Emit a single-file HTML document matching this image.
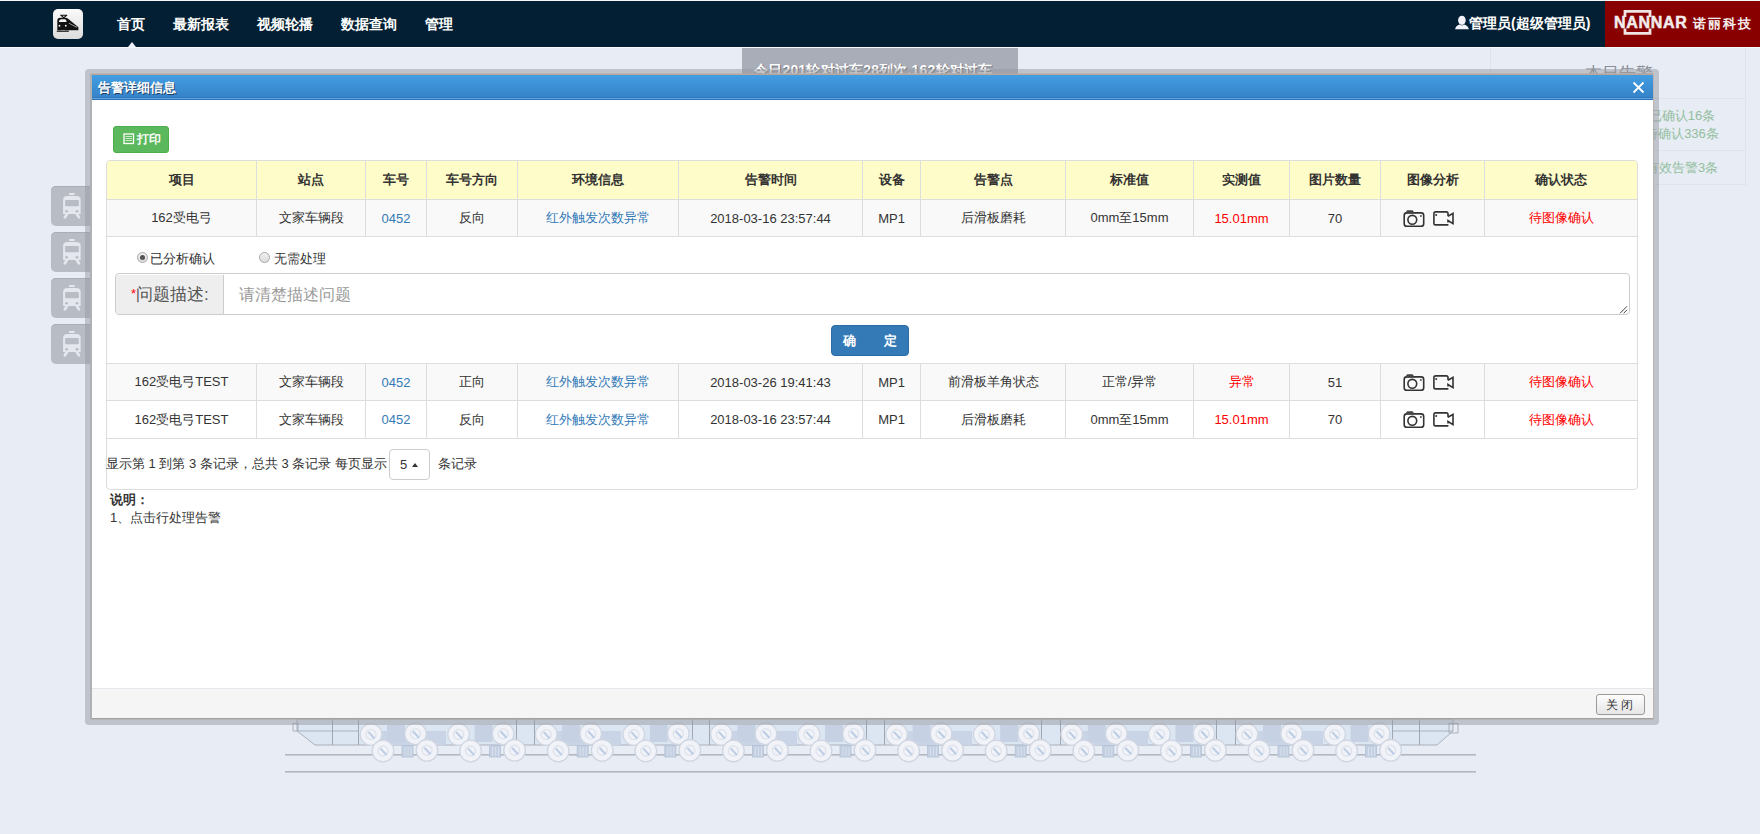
<!DOCTYPE html>
<html><head><meta charset="utf-8">
<style>
*{box-sizing:border-box;margin:0;padding:0}
html,body{width:1760px;height:834px;overflow:hidden}
body{position:relative;background:#e8ecf4;font-family:"Liberation Sans",sans-serif;font-size:13px;color:#333}
.abs{position:absolute}
#nav{left:0;top:1px;width:1760px;height:46px;background:#031f33}
#topline{left:0;top:0;width:1760px;height:1px;background:#f4f6fa}
.logo{left:53px;top:9px;width:30px;height:30px;border-radius:5px;background:linear-gradient(#fafafa,#dcdcdc)}
.menu{top:16px;color:#fff;font-weight:bold;font-size:14px;line-height:16px;white-space:nowrap}
.caret{left:128px;top:42px;width:0;height:0;border-left:4px solid transparent;border-right:4px solid transparent;border-bottom:5px solid #eef1f7}
.brand{left:1605px;top:1px;width:155px;height:46px;background:#880000}
.user{left:1455px;top:15px;color:#fff;font-weight:bold;font-size:14px;line-height:16px;white-space:nowrap}
/* background widgets */
.tipbox{left:742px;top:47px;width:276px;height:40px;background:#a9adb8}
.tiptext{left:754px;top:62px;color:#fff;font-weight:bold;font-size:14px;line-height:16px;letter-spacing:0.2px;white-space:nowrap;text-shadow:1px 1px 1px #6a6e78}
.rpanel{left:1490px;top:47px;width:256px;height:138px;border:1px solid #dfe3ea;border-top:none}
.rline{left:1490px;width:256px;height:1px;background:#dfe3ea}
.rtitle{left:1585px;top:63px;font-size:16.5px;line-height:20px;color:#8a8e96;white-space:nowrap}
.gtext{color:#93bf9f;font-size:13px;line-height:15px;white-space:nowrap;text-align:center;width:140px;left:1612px}
.sidebtn{left:51px;width:50px;height:40px;border-radius:5px;background:#b8bcc5;box-shadow:inset 0 1px 0 #a9adb6}
/* modal */
#frame{left:85px;top:69px;width:1574px;height:656px;border-radius:4px;background:rgba(150,154,162,0.5)}
#modal{left:91px;top:74px;width:1562px;height:645px;background:#fff;box-shadow:0 0 0 0.6px #b9aaa2}
#mtitle{left:0;top:0;width:1562px;height:26px;border-top:1px solid #b9a69a;background:linear-gradient(#429de2,#3581c6);border-bottom:1px solid #2c74b8;box-shadow:inset 0 -1px 0 #62a2dc, inset 0 -2px 0 #2f78bd}
#mtitle span{position:absolute;left:7px;top:6px;color:#fff;font-weight:bold;font-size:13px;line-height:14px;text-shadow:1px 1px 0 rgba(20,40,70,0.75)}
#mfoot{left:0;top:614px;width:1562px;height:31px;background:#f5f5f5;border-top:1px solid #e3e6ea;border-bottom:1px solid #9da1a8}
.closebtn{left:1505px;top:5px;width:49px;height:21px;border:1px solid #9a9a9a;border-radius:3px;background:linear-gradient(#fdfdfd,#e6e6e6);font-size:12px;line-height:21px;text-align:center;color:#333;letter-spacing:3px}
.printbtn{left:22px;top:52px;width:56px;height:27px;border:1px solid #4cae4c;border-radius:3px;background:#5cb85c;color:#fff;font-size:12px;line-height:25px;padding-left:9px;white-space:nowrap}
/* table */
#tc{left:15px;top:86px;width:1532px;height:330px;border:1px solid #ddd;border-radius:4px;overflow:hidden}
table{border-collapse:collapse;table-layout:fixed;position:absolute;left:-1px;top:-1px;width:1532px}
td,th{border:1px solid #ddd;text-align:center;font-size:13px;height:37px;padding:0;white-space:nowrap;overflow:hidden}
th{height:39px;background:#fefcc8;font-weight:bold;color:#333}
tr.s td{background:#f9f9f9}
.lk{color:#337ab7}
.rd{color:#f00}
.radio{width:11px;height:11px;border-radius:50%;border:1px solid #a9a9a9;background:linear-gradient(#f0f0f0,#dcdcdc)}
.radio.on::after{content:"";position:absolute;left:2px;top:2px;width:5px;height:5px;border-radius:50%;background:#555}
.rlab{font-size:13px;line-height:14px;white-space:nowrap;color:#333}
.ig{left:8px;top:36px;width:1515px;height:42px;border:1px solid #ccc;border-radius:4px;overflow:hidden}
.addon{left:0;top:1px;width:108px;height:40px;background:#eee;border-right:1px solid #ccc;font-size:17px;line-height:40px;text-align:left;padding-left:15px;color:#555}
.ph{left:123px;top:1px;font-size:16px;line-height:40px;color:#999;white-space:nowrap}
.okbtn{left:724px;top:88px;width:78px;height:31px;border:1px solid #2e6da4;border-radius:4px;background:#337ab7;color:#fff;font-weight:bold;font-size:13px;line-height:29px;text-align:left}
.pag{left:0;top:360px;font-size:13px;line-height:14px;white-space:nowrap;color:#333}
.psel{left:282px;top:374px;width:41px;height:31px;border:1px solid #ccc;border-radius:4px;background:#fff;font-size:13px;line-height:29px;padding-left:10px}
</style></head>
<body>
<div class="abs" id="topline"></div>
<div class="abs" id="nav"></div>
<div class="abs logo"><svg class="abs" style="left:0;top:0" width="30" height="30">
<path d="M7.3 6.3H14.2M8 6.4L10.8 8.7L13.6 6.4" stroke="#111" stroke-width="1.1" fill="none"/>
<path d="M4.3 21.3V11.8Q4.3 8.8 7.2 8.8H12.2Q13.8 8.8 14.8 9.6L25.4 18.3V21.3Z" fill="#111"/>
<path d="M6 13Q6 10.2 8.6 10.2H11.8Q13.6 10.2 13.6 13Z" fill="#f4f4f4"/>
<circle cx="6.5" cy="16.7" r="0.95" fill="#eee"/><circle cx="12.8" cy="16.7" r="0.95" fill="#eee"/>
<path d="M15.9 14.2L24 18.4" stroke="#bbb" stroke-width="0.8"/>
<path d="M3.8 21.6H15.8V22.8H3.8Z" fill="#111"/><path d="M8.4 20.9H12V21.6H8.4Z" fill="#999"/></svg></div>
<div class="abs menu" style="left:117px">首页</div>
<div class="abs menu" style="left:173px">最新报表</div>
<div class="abs menu" style="left:257px">视频轮播</div>
<div class="abs menu" style="left:341px">数据查询</div>
<div class="abs menu" style="left:425px">管理</div>
<div class="abs caret"></div>
<svg class="abs" style="left:1454px;top:15px" width="16" height="15"><ellipse cx="7.9" cy="5.3" rx="3.8" ry="4.6" fill="#f2f2fa"/><path d="M1 14.3Q1.8 10.6 5.6 9.4L7.9 10.6L10.2 9.4Q14 10.6 15 14.3Z" fill="#f2f2fa"/></svg><div class="abs user" style="left:1469px">管理员(超级管理员)</div>
<div class="abs brand"></div>
<svg class="abs" style="left:1622px;top:9px" width="32" height="27"><path d="M3 8V2.4H28V8" fill="none" stroke="#f0e4e4" stroke-width="2.8"/><path d="M3 19.5V24.3H28V19.5" fill="none" stroke="#f0e4e4" stroke-width="2.8"/></svg>
<div class="abs" style="left:1614px;top:14px;color:#f3ecec;font-weight:bold;font-size:16px;line-height:18px;letter-spacing:0.7px;white-space:nowrap;-webkit-text-stroke:0.5px #f3ecec">NANNAR</div>
<div class="abs" style="left:1693px;top:16px;color:#f3ecec;font-size:13px;line-height:15px;letter-spacing:2px;white-space:nowrap;font-weight:bold">诺丽科技</div>

<!-- background page widgets -->
<div class="abs tipbox"></div>
<div class="abs tiptext">今日201轮对过车28列次,162轮对过车</div>
<div class="abs rpanel"></div>
<div class="abs rline" style="top:98px"></div>
<div class="abs rline" style="top:150px"></div>
<div class="abs rtitle">本日告警</div>
<div class="abs gtext" style="top:108px">已确认16条</div>
<div class="abs gtext" style="top:126px">待确认336条</div>
<div class="abs gtext" style="top:160px">有效告警3条</div>
<div class="abs sidebtn" style="top:186px"><svg class="abs" style="left:11px;top:6px" width="21" height="27"><g fill="#e4e7ee"><rect x="6.8" y="0.9" width="6.1" height="2.2" rx="1.1"/><path d="M1.1 22.1V8.2Q1.1 4 5.3 4H14.4Q18.65 4 18.65 8.2V22.1Z"/></g><rect x="3.1" y="8" width="13.7" height="6.2" rx="1" fill="#b8bcc5"/><circle cx="4.6" cy="19.3" r="1.4" fill="#b8bcc5"/><circle cx="15" cy="19.3" r="1.4" fill="#b8bcc5"/><path d="M4.9 22L2.9 25.4M14.9 22L16.9 25.4" stroke="#e4e7ee" stroke-width="2.8" stroke-linecap="round"/></svg></div>
<div class="abs sidebtn" style="top:232px"><svg class="abs" style="left:11px;top:6px" width="21" height="27"><g fill="#e4e7ee"><rect x="6.8" y="0.9" width="6.1" height="2.2" rx="1.1"/><path d="M1.1 22.1V8.2Q1.1 4 5.3 4H14.4Q18.65 4 18.65 8.2V22.1Z"/></g><rect x="3.1" y="8" width="13.7" height="6.2" rx="1" fill="#b8bcc5"/><circle cx="4.6" cy="19.3" r="1.4" fill="#b8bcc5"/><circle cx="15" cy="19.3" r="1.4" fill="#b8bcc5"/><path d="M4.9 22L2.9 25.4M14.9 22L16.9 25.4" stroke="#e4e7ee" stroke-width="2.8" stroke-linecap="round"/></svg></div>
<div class="abs sidebtn" style="top:278px"><svg class="abs" style="left:11px;top:6px" width="21" height="27"><g fill="#e4e7ee"><rect x="6.8" y="0.9" width="6.1" height="2.2" rx="1.1"/><path d="M1.1 22.1V8.2Q1.1 4 5.3 4H14.4Q18.65 4 18.65 8.2V22.1Z"/></g><rect x="3.1" y="8" width="13.7" height="6.2" rx="1" fill="#b8bcc5"/><circle cx="4.6" cy="19.3" r="1.4" fill="#b8bcc5"/><circle cx="15" cy="19.3" r="1.4" fill="#b8bcc5"/><path d="M4.9 22L2.9 25.4M14.9 22L16.9 25.4" stroke="#e4e7ee" stroke-width="2.8" stroke-linecap="round"/></svg></div>
<div class="abs sidebtn" style="top:324px"><svg class="abs" style="left:11px;top:6px" width="21" height="27"><g fill="#e4e7ee"><rect x="6.8" y="0.9" width="6.1" height="2.2" rx="1.1"/><path d="M1.1 22.1V8.2Q1.1 4 5.3 4H14.4Q18.65 4 18.65 8.2V22.1Z"/></g><rect x="3.1" y="8" width="13.7" height="6.2" rx="1" fill="#b8bcc5"/><circle cx="4.6" cy="19.3" r="1.4" fill="#b8bcc5"/><circle cx="15" cy="19.3" r="1.4" fill="#b8bcc5"/><path d="M4.9 22L2.9 25.4M14.9 22L16.9 25.4" stroke="#e4e7ee" stroke-width="2.8" stroke-linecap="round"/></svg></div>

<svg class="abs" style="left:0;top:700px" width="1760" height="100">
<rect x="285" y="54" width="1191" height="1.6" fill="#b3b7bf"/>
<rect x="285" y="71" width="1191" height="1.6" fill="#b3b7bf"/>
<path d="M297 19H1453V31L1437 45H315L297 31Z" fill="#dce6f3" stroke="#a3aab4" stroke-width="0.9"/>
<path d="M293 23.5H298V31H293Z M1449 23.5H1458V33H1449Z" fill="none" stroke="#a3aab4" stroke-width="0.9"/>
<path d="M297 31H358 M1392 31H1453" stroke="#a3aab4" stroke-width="0.9"/>
<path d="M332.5 19V45" stroke="#a0a7b1" stroke-width="1"/>
<path d="M358.5 19V45" stroke="#a0a7b1" stroke-width="1"/>
<path d="M516.5 19V45" stroke="#a0a7b1" stroke-width="1"/>
<path d="M534.5 19V45" stroke="#a0a7b1" stroke-width="1"/>
<path d="M692.5 19V45" stroke="#a0a7b1" stroke-width="1"/>
<path d="M709.5 19V45" stroke="#a0a7b1" stroke-width="1"/>
<path d="M866.5 19V45" stroke="#a0a7b1" stroke-width="1"/>
<path d="M884.5 19V45" stroke="#a0a7b1" stroke-width="1"/>
<path d="M1041.5 19V45" stroke="#a0a7b1" stroke-width="1"/>
<path d="M1060.5 19V45" stroke="#a0a7b1" stroke-width="1"/>
<path d="M1216.5 19V45" stroke="#a0a7b1" stroke-width="1"/>
<path d="M1235.5 19V45" stroke="#a0a7b1" stroke-width="1"/>
<path d="M1392.5 19V45" stroke="#a0a7b1" stroke-width="1"/>
<path d="M1419.5 19V45" stroke="#a0a7b1" stroke-width="1"/>
<rect x="379" y="31" width="67" height="14" fill="#c9d5e6"/>
<rect x="555" y="31" width="66" height="14" fill="#c9d5e6"/>
<rect x="730" y="31" width="67" height="14" fill="#c9d5e6"/>
<rect x="905" y="31" width="67" height="14" fill="#c9d5e6"/>
<rect x="1080" y="31" width="68" height="14" fill="#c9d5e6"/>
<rect x="1255" y="31" width="68" height="14" fill="#c9d5e6"/>
<rect x="387.0" y="25" width="18" height="17" fill="#c6d2e3"/><circle cx="371.0" cy="34.5" r="10.8" fill="#f1f3f8" stroke="#cfd6e1" stroke-width="1.3"/><circle cx="371.0" cy="34.5" r="5" fill="none" stroke="#dfe4ec" stroke-width="1.5"/><path d="M368.4 31.9L374.5 38.5" stroke="#bccde4" stroke-width="2"/><circle cx="415.5" cy="33.8" r="10.8" fill="#f1f3f8" stroke="#cfd6e1" stroke-width="1.3"/><circle cx="415.5" cy="33.8" r="5" fill="none" stroke="#dfe4ec" stroke-width="1.5"/><path d="M412.9 31.2L419.0 37.8" stroke="#bccde4" stroke-width="2"/><circle cx="383.0" cy="51" r="10.8" fill="#f1f3f8" stroke="#cfd6e1" stroke-width="1.3"/><circle cx="383.0" cy="51" r="5" fill="none" stroke="#dfe4ec" stroke-width="1.5"/><path d="M380.4 48.4L386.5 55" stroke="#bccde4" stroke-width="2"/><circle cx="427.0" cy="50.3" r="10.8" fill="#f1f3f8" stroke="#cfd6e1" stroke-width="1.3"/><circle cx="427.0" cy="50.3" r="5" fill="none" stroke="#dfe4ec" stroke-width="1.5"/><path d="M424.4 47.7L430.5 54.3" stroke="#bccde4" stroke-width="2"/><rect x="402.0" y="45.5" width="11" height="11.5" fill="#c4d0e2" stroke="#b4c2d8" stroke-width="0.8"/><path d="M405.0 47V56M408.0 47V56M411.0 47V56" stroke="#dde4ef" stroke-width="0.8"/>
<rect x="474.6" y="25" width="18" height="17" fill="#c6d2e3"/><circle cx="458.6" cy="34.5" r="10.8" fill="#f1f3f8" stroke="#cfd6e1" stroke-width="1.3"/><circle cx="458.6" cy="34.5" r="5" fill="none" stroke="#dfe4ec" stroke-width="1.5"/><path d="M456.0 31.9L462.1 38.5" stroke="#bccde4" stroke-width="2"/><circle cx="503.1" cy="33.8" r="10.8" fill="#f1f3f8" stroke="#cfd6e1" stroke-width="1.3"/><circle cx="503.1" cy="33.8" r="5" fill="none" stroke="#dfe4ec" stroke-width="1.5"/><path d="M500.5 31.2L506.6 37.8" stroke="#bccde4" stroke-width="2"/><circle cx="470.6" cy="51" r="10.8" fill="#f1f3f8" stroke="#cfd6e1" stroke-width="1.3"/><circle cx="470.6" cy="51" r="5" fill="none" stroke="#dfe4ec" stroke-width="1.5"/><path d="M468.0 48.4L474.1 55" stroke="#bccde4" stroke-width="2"/><circle cx="514.6" cy="50.3" r="10.8" fill="#f1f3f8" stroke="#cfd6e1" stroke-width="1.3"/><circle cx="514.6" cy="50.3" r="5" fill="none" stroke="#dfe4ec" stroke-width="1.5"/><path d="M512.0 47.7L518.1 54.3" stroke="#bccde4" stroke-width="2"/><rect x="489.6" y="45.5" width="11" height="11.5" fill="#c4d0e2" stroke="#b4c2d8" stroke-width="0.8"/><path d="M492.6 47V56M495.6 47V56M498.6 47V56" stroke="#dde4ef" stroke-width="0.8"/>
<rect x="562.2" y="25" width="18" height="17" fill="#c6d2e3"/><circle cx="546.2" cy="34.5" r="10.8" fill="#f1f3f8" stroke="#cfd6e1" stroke-width="1.3"/><circle cx="546.2" cy="34.5" r="5" fill="none" stroke="#dfe4ec" stroke-width="1.5"/><path d="M543.6 31.9L549.7 38.5" stroke="#bccde4" stroke-width="2"/><circle cx="590.7" cy="33.8" r="10.8" fill="#f1f3f8" stroke="#cfd6e1" stroke-width="1.3"/><circle cx="590.7" cy="33.8" r="5" fill="none" stroke="#dfe4ec" stroke-width="1.5"/><path d="M588.1 31.2L594.2 37.8" stroke="#bccde4" stroke-width="2"/><circle cx="558.2" cy="51" r="10.8" fill="#f1f3f8" stroke="#cfd6e1" stroke-width="1.3"/><circle cx="558.2" cy="51" r="5" fill="none" stroke="#dfe4ec" stroke-width="1.5"/><path d="M555.6 48.4L561.7 55" stroke="#bccde4" stroke-width="2"/><circle cx="602.2" cy="50.3" r="10.8" fill="#f1f3f8" stroke="#cfd6e1" stroke-width="1.3"/><circle cx="602.2" cy="50.3" r="5" fill="none" stroke="#dfe4ec" stroke-width="1.5"/><path d="M599.6 47.7L605.7 54.3" stroke="#bccde4" stroke-width="2"/><rect x="577.2" y="45.5" width="11" height="11.5" fill="#c4d0e2" stroke="#b4c2d8" stroke-width="0.8"/><path d="M580.2 47V56M583.2 47V56M586.2 47V56" stroke="#dde4ef" stroke-width="0.8"/>
<rect x="649.8" y="25" width="18" height="17" fill="#c6d2e3"/><circle cx="633.8" cy="34.5" r="10.8" fill="#f1f3f8" stroke="#cfd6e1" stroke-width="1.3"/><circle cx="633.8" cy="34.5" r="5" fill="none" stroke="#dfe4ec" stroke-width="1.5"/><path d="M631.2 31.9L637.3 38.5" stroke="#bccde4" stroke-width="2"/><circle cx="678.3" cy="33.8" r="10.8" fill="#f1f3f8" stroke="#cfd6e1" stroke-width="1.3"/><circle cx="678.3" cy="33.8" r="5" fill="none" stroke="#dfe4ec" stroke-width="1.5"/><path d="M675.7 31.2L681.8 37.8" stroke="#bccde4" stroke-width="2"/><circle cx="645.8" cy="51" r="10.8" fill="#f1f3f8" stroke="#cfd6e1" stroke-width="1.3"/><circle cx="645.8" cy="51" r="5" fill="none" stroke="#dfe4ec" stroke-width="1.5"/><path d="M643.2 48.4L649.3 55" stroke="#bccde4" stroke-width="2"/><circle cx="689.8" cy="50.3" r="10.8" fill="#f1f3f8" stroke="#cfd6e1" stroke-width="1.3"/><circle cx="689.8" cy="50.3" r="5" fill="none" stroke="#dfe4ec" stroke-width="1.5"/><path d="M687.2 47.7L693.3 54.3" stroke="#bccde4" stroke-width="2"/><rect x="664.8" y="45.5" width="11" height="11.5" fill="#c4d0e2" stroke="#b4c2d8" stroke-width="0.8"/><path d="M667.8 47V56M670.8 47V56M673.8 47V56" stroke="#dde4ef" stroke-width="0.8"/>
<rect x="737.4" y="25" width="18" height="17" fill="#c6d2e3"/><circle cx="721.4" cy="34.5" r="10.8" fill="#f1f3f8" stroke="#cfd6e1" stroke-width="1.3"/><circle cx="721.4" cy="34.5" r="5" fill="none" stroke="#dfe4ec" stroke-width="1.5"/><path d="M718.8 31.9L724.9 38.5" stroke="#bccde4" stroke-width="2"/><circle cx="765.9" cy="33.8" r="10.8" fill="#f1f3f8" stroke="#cfd6e1" stroke-width="1.3"/><circle cx="765.9" cy="33.8" r="5" fill="none" stroke="#dfe4ec" stroke-width="1.5"/><path d="M763.3 31.2L769.4 37.8" stroke="#bccde4" stroke-width="2"/><circle cx="733.4" cy="51" r="10.8" fill="#f1f3f8" stroke="#cfd6e1" stroke-width="1.3"/><circle cx="733.4" cy="51" r="5" fill="none" stroke="#dfe4ec" stroke-width="1.5"/><path d="M730.8 48.4L736.9 55" stroke="#bccde4" stroke-width="2"/><circle cx="777.4" cy="50.3" r="10.8" fill="#f1f3f8" stroke="#cfd6e1" stroke-width="1.3"/><circle cx="777.4" cy="50.3" r="5" fill="none" stroke="#dfe4ec" stroke-width="1.5"/><path d="M774.8 47.7L780.9 54.3" stroke="#bccde4" stroke-width="2"/><rect x="752.4" y="45.5" width="11" height="11.5" fill="#c4d0e2" stroke="#b4c2d8" stroke-width="0.8"/><path d="M755.4 47V56M758.4 47V56M761.4 47V56" stroke="#dde4ef" stroke-width="0.8"/>
<rect x="825.0" y="25" width="18" height="17" fill="#c6d2e3"/><circle cx="809.0" cy="34.5" r="10.8" fill="#f1f3f8" stroke="#cfd6e1" stroke-width="1.3"/><circle cx="809.0" cy="34.5" r="5" fill="none" stroke="#dfe4ec" stroke-width="1.5"/><path d="M806.4 31.9L812.5 38.5" stroke="#bccde4" stroke-width="2"/><circle cx="853.5" cy="33.8" r="10.8" fill="#f1f3f8" stroke="#cfd6e1" stroke-width="1.3"/><circle cx="853.5" cy="33.8" r="5" fill="none" stroke="#dfe4ec" stroke-width="1.5"/><path d="M850.9 31.2L857.0 37.8" stroke="#bccde4" stroke-width="2"/><circle cx="821.0" cy="51" r="10.8" fill="#f1f3f8" stroke="#cfd6e1" stroke-width="1.3"/><circle cx="821.0" cy="51" r="5" fill="none" stroke="#dfe4ec" stroke-width="1.5"/><path d="M818.4 48.4L824.5 55" stroke="#bccde4" stroke-width="2"/><circle cx="865.0" cy="50.3" r="10.8" fill="#f1f3f8" stroke="#cfd6e1" stroke-width="1.3"/><circle cx="865.0" cy="50.3" r="5" fill="none" stroke="#dfe4ec" stroke-width="1.5"/><path d="M862.4 47.7L868.5 54.3" stroke="#bccde4" stroke-width="2"/><rect x="840.0" y="45.5" width="11" height="11.5" fill="#c4d0e2" stroke="#b4c2d8" stroke-width="0.8"/><path d="M843.0 47V56M846.0 47V56M849.0 47V56" stroke="#dde4ef" stroke-width="0.8"/>
<rect x="912.6" y="25" width="18" height="17" fill="#c6d2e3"/><circle cx="896.6" cy="34.5" r="10.8" fill="#f1f3f8" stroke="#cfd6e1" stroke-width="1.3"/><circle cx="896.6" cy="34.5" r="5" fill="none" stroke="#dfe4ec" stroke-width="1.5"/><path d="M894.0 31.9L900.1 38.5" stroke="#bccde4" stroke-width="2"/><circle cx="941.1" cy="33.8" r="10.8" fill="#f1f3f8" stroke="#cfd6e1" stroke-width="1.3"/><circle cx="941.1" cy="33.8" r="5" fill="none" stroke="#dfe4ec" stroke-width="1.5"/><path d="M938.5 31.2L944.6 37.8" stroke="#bccde4" stroke-width="2"/><circle cx="908.6" cy="51" r="10.8" fill="#f1f3f8" stroke="#cfd6e1" stroke-width="1.3"/><circle cx="908.6" cy="51" r="5" fill="none" stroke="#dfe4ec" stroke-width="1.5"/><path d="M906.0 48.4L912.1 55" stroke="#bccde4" stroke-width="2"/><circle cx="952.6" cy="50.3" r="10.8" fill="#f1f3f8" stroke="#cfd6e1" stroke-width="1.3"/><circle cx="952.6" cy="50.3" r="5" fill="none" stroke="#dfe4ec" stroke-width="1.5"/><path d="M950.0 47.7L956.1 54.3" stroke="#bccde4" stroke-width="2"/><rect x="927.6" y="45.5" width="11" height="11.5" fill="#c4d0e2" stroke="#b4c2d8" stroke-width="0.8"/><path d="M930.6 47V56M933.6 47V56M936.6 47V56" stroke="#dde4ef" stroke-width="0.8"/>
<rect x="1000.2" y="25" width="18" height="17" fill="#c6d2e3"/><circle cx="984.2" cy="34.5" r="10.8" fill="#f1f3f8" stroke="#cfd6e1" stroke-width="1.3"/><circle cx="984.2" cy="34.5" r="5" fill="none" stroke="#dfe4ec" stroke-width="1.5"/><path d="M981.6 31.9L987.7 38.5" stroke="#bccde4" stroke-width="2"/><circle cx="1028.7" cy="33.8" r="10.8" fill="#f1f3f8" stroke="#cfd6e1" stroke-width="1.3"/><circle cx="1028.7" cy="33.8" r="5" fill="none" stroke="#dfe4ec" stroke-width="1.5"/><path d="M1026.1 31.2L1032.2 37.8" stroke="#bccde4" stroke-width="2"/><circle cx="996.2" cy="51" r="10.8" fill="#f1f3f8" stroke="#cfd6e1" stroke-width="1.3"/><circle cx="996.2" cy="51" r="5" fill="none" stroke="#dfe4ec" stroke-width="1.5"/><path d="M993.6 48.4L999.7 55" stroke="#bccde4" stroke-width="2"/><circle cx="1040.2" cy="50.3" r="10.8" fill="#f1f3f8" stroke="#cfd6e1" stroke-width="1.3"/><circle cx="1040.2" cy="50.3" r="5" fill="none" stroke="#dfe4ec" stroke-width="1.5"/><path d="M1037.6 47.7L1043.7 54.3" stroke="#bccde4" stroke-width="2"/><rect x="1015.2" y="45.5" width="11" height="11.5" fill="#c4d0e2" stroke="#b4c2d8" stroke-width="0.8"/><path d="M1018.2 47V56M1021.2 47V56M1024.2 47V56" stroke="#dde4ef" stroke-width="0.8"/>
<rect x="1087.8" y="25" width="18" height="17" fill="#c6d2e3"/><circle cx="1071.8" cy="34.5" r="10.8" fill="#f1f3f8" stroke="#cfd6e1" stroke-width="1.3"/><circle cx="1071.8" cy="34.5" r="5" fill="none" stroke="#dfe4ec" stroke-width="1.5"/><path d="M1069.2 31.9L1075.3 38.5" stroke="#bccde4" stroke-width="2"/><circle cx="1116.3" cy="33.8" r="10.8" fill="#f1f3f8" stroke="#cfd6e1" stroke-width="1.3"/><circle cx="1116.3" cy="33.8" r="5" fill="none" stroke="#dfe4ec" stroke-width="1.5"/><path d="M1113.7 31.2L1119.8 37.8" stroke="#bccde4" stroke-width="2"/><circle cx="1083.8" cy="51" r="10.8" fill="#f1f3f8" stroke="#cfd6e1" stroke-width="1.3"/><circle cx="1083.8" cy="51" r="5" fill="none" stroke="#dfe4ec" stroke-width="1.5"/><path d="M1081.2 48.4L1087.3 55" stroke="#bccde4" stroke-width="2"/><circle cx="1127.8" cy="50.3" r="10.8" fill="#f1f3f8" stroke="#cfd6e1" stroke-width="1.3"/><circle cx="1127.8" cy="50.3" r="5" fill="none" stroke="#dfe4ec" stroke-width="1.5"/><path d="M1125.2 47.7L1131.3 54.3" stroke="#bccde4" stroke-width="2"/><rect x="1102.8" y="45.5" width="11" height="11.5" fill="#c4d0e2" stroke="#b4c2d8" stroke-width="0.8"/><path d="M1105.8 47V56M1108.8 47V56M1111.8 47V56" stroke="#dde4ef" stroke-width="0.8"/>
<rect x="1175.4" y="25" width="18" height="17" fill="#c6d2e3"/><circle cx="1159.4" cy="34.5" r="10.8" fill="#f1f3f8" stroke="#cfd6e1" stroke-width="1.3"/><circle cx="1159.4" cy="34.5" r="5" fill="none" stroke="#dfe4ec" stroke-width="1.5"/><path d="M1156.8 31.9L1162.9 38.5" stroke="#bccde4" stroke-width="2"/><circle cx="1203.9" cy="33.8" r="10.8" fill="#f1f3f8" stroke="#cfd6e1" stroke-width="1.3"/><circle cx="1203.9" cy="33.8" r="5" fill="none" stroke="#dfe4ec" stroke-width="1.5"/><path d="M1201.3 31.2L1207.4 37.8" stroke="#bccde4" stroke-width="2"/><circle cx="1171.4" cy="51" r="10.8" fill="#f1f3f8" stroke="#cfd6e1" stroke-width="1.3"/><circle cx="1171.4" cy="51" r="5" fill="none" stroke="#dfe4ec" stroke-width="1.5"/><path d="M1168.8 48.4L1174.9 55" stroke="#bccde4" stroke-width="2"/><circle cx="1215.4" cy="50.3" r="10.8" fill="#f1f3f8" stroke="#cfd6e1" stroke-width="1.3"/><circle cx="1215.4" cy="50.3" r="5" fill="none" stroke="#dfe4ec" stroke-width="1.5"/><path d="M1212.8 47.7L1218.9 54.3" stroke="#bccde4" stroke-width="2"/><rect x="1190.4" y="45.5" width="11" height="11.5" fill="#c4d0e2" stroke="#b4c2d8" stroke-width="0.8"/><path d="M1193.4 47V56M1196.4 47V56M1199.4 47V56" stroke="#dde4ef" stroke-width="0.8"/>
<rect x="1263.0" y="25" width="18" height="17" fill="#c6d2e3"/><circle cx="1247.0" cy="34.5" r="10.8" fill="#f1f3f8" stroke="#cfd6e1" stroke-width="1.3"/><circle cx="1247.0" cy="34.5" r="5" fill="none" stroke="#dfe4ec" stroke-width="1.5"/><path d="M1244.4 31.9L1250.5 38.5" stroke="#bccde4" stroke-width="2"/><circle cx="1291.5" cy="33.8" r="10.8" fill="#f1f3f8" stroke="#cfd6e1" stroke-width="1.3"/><circle cx="1291.5" cy="33.8" r="5" fill="none" stroke="#dfe4ec" stroke-width="1.5"/><path d="M1288.9 31.2L1295.0 37.8" stroke="#bccde4" stroke-width="2"/><circle cx="1259.0" cy="51" r="10.8" fill="#f1f3f8" stroke="#cfd6e1" stroke-width="1.3"/><circle cx="1259.0" cy="51" r="5" fill="none" stroke="#dfe4ec" stroke-width="1.5"/><path d="M1256.4 48.4L1262.5 55" stroke="#bccde4" stroke-width="2"/><circle cx="1303.0" cy="50.3" r="10.8" fill="#f1f3f8" stroke="#cfd6e1" stroke-width="1.3"/><circle cx="1303.0" cy="50.3" r="5" fill="none" stroke="#dfe4ec" stroke-width="1.5"/><path d="M1300.4 47.7L1306.5 54.3" stroke="#bccde4" stroke-width="2"/><rect x="1278.0" y="45.5" width="11" height="11.5" fill="#c4d0e2" stroke="#b4c2d8" stroke-width="0.8"/><path d="M1281.0 47V56M1284.0 47V56M1287.0 47V56" stroke="#dde4ef" stroke-width="0.8"/>
<rect x="1350.6" y="25" width="18" height="17" fill="#c6d2e3"/><circle cx="1334.6" cy="34.5" r="10.8" fill="#f1f3f8" stroke="#cfd6e1" stroke-width="1.3"/><circle cx="1334.6" cy="34.5" r="5" fill="none" stroke="#dfe4ec" stroke-width="1.5"/><path d="M1332.0 31.9L1338.1 38.5" stroke="#bccde4" stroke-width="2"/><circle cx="1379.1" cy="33.8" r="10.8" fill="#f1f3f8" stroke="#cfd6e1" stroke-width="1.3"/><circle cx="1379.1" cy="33.8" r="5" fill="none" stroke="#dfe4ec" stroke-width="1.5"/><path d="M1376.5 31.2L1382.6 37.8" stroke="#bccde4" stroke-width="2"/><circle cx="1346.6" cy="51" r="10.8" fill="#f1f3f8" stroke="#cfd6e1" stroke-width="1.3"/><circle cx="1346.6" cy="51" r="5" fill="none" stroke="#dfe4ec" stroke-width="1.5"/><path d="M1344.0 48.4L1350.1 55" stroke="#bccde4" stroke-width="2"/><circle cx="1390.6" cy="50.3" r="10.8" fill="#f1f3f8" stroke="#cfd6e1" stroke-width="1.3"/><circle cx="1390.6" cy="50.3" r="5" fill="none" stroke="#dfe4ec" stroke-width="1.5"/><path d="M1388.0 47.7L1394.1 54.3" stroke="#bccde4" stroke-width="2"/><rect x="1365.6" y="45.5" width="11" height="11.5" fill="#c4d0e2" stroke="#b4c2d8" stroke-width="0.8"/><path d="M1368.6 47V56M1371.6 47V56M1374.6 47V56" stroke="#dde4ef" stroke-width="0.8"/>
</svg>
<div class="abs" style="left:0;top:47px;width:1760px;height:1px;background:#f7f8fb"></div>
<!-- modal -->
<div class="abs" id="frame"></div>
<div class="abs" id="modal">
  <div class="abs" id="mtitle"><span>告警详细信息</span><svg class="abs" style="left:1541px;top:6px" width="13" height="13"><path d="M1.5 1.5L11.5 11.5M11.5 1.5L1.5 11.5" stroke="#fff" stroke-width="1.8"/></svg></div>
  <div class="abs printbtn"><svg class="abs" style="left:9px;top:6px" width="12" height="12"><rect x="1" y="1" width="9.5" height="9.5" fill="none" stroke="#fff" stroke-width="1.3"/><path d="M2.5 3.5H9M2.5 5.5H9M2.5 7.5H9" stroke="#d8f0d8" stroke-width="0.9"/></svg><span class="abs" style="left:23px;top:0;font-size:11.5px;font-weight:bold">打印</span></div>
  <div class="abs" id="tc">
    <table>
      <colgroup>
        <col style="width:150px"><col style="width:109px"><col style="width:61px"><col style="width:91px"><col style="width:161px"><col style="width:184px"><col style="width:58px"><col style="width:145px"><col style="width:128px"><col style="width:96px"><col style="width:91px"><col style="width:104px"><col style="width:153px">
      </colgroup>
      <tr><th>项目</th><th>站点</th><th>车号</th><th>车号方向</th><th>环境信息</th><th>告警时间</th><th>设备</th><th>告警点</th><th>标准值</th><th>实测值</th><th>图片数量</th><th>图像分析</th><th>确认状态</th></tr>
      <tr class="s"><td>162受电弓</td><td>文家车辆段</td><td class="lk">0452</td><td>反向</td><td class="lk">红外触发次数异常</td><td>2018-03-16 23:57:44</td><td>MP1</td><td>后滑板磨耗</td><td>0mm至15mm</td><td class="rd">15.01mm</td><td>70</td><td><svg width="62" height="19" style="vertical-align:middle;position:relative;top:0px"><g fill="none" stroke="#333" stroke-width="1.6"><rect x="2.2" y="3.9" width="19.5" height="13.4" rx="2.6"/><circle cx="10.3" cy="10.8" r="4.4"/><path d="M46 7.3V4.6Q46 2.9 44.3 2.9H33.6Q31.9 2.9 31.9 4.6V14.2Q31.9 15.9 33.6 15.9H46.4M46 7.3L51 4.3V14.6L46 11.5V13.6"/></g><path d="M2.8 4.6L5.2 1.3H10.6L13 4.6Z" fill="#444"/><circle cx="18.9" cy="6.9" r="1" fill="#555"/><circle cx="34.2" cy="5.9" r="1" fill="#333"/></svg></td><td class="rd">待图像确认</td></tr>
      <tr><td colspan="13" style="height:127px;position:relative;background:#fff">
        <div class="abs radio on" style="left:30px;top:15px"></div><div class="abs rlab" style="left:43px;top:15px">已分析确认</div>
        <div class="abs radio" style="left:152px;top:15px"></div><div class="abs rlab" style="left:167px;top:15px">无需处理</div>
        <div class="abs ig">
          <div class="abs addon"><span style="color:#f00;font-size:13px;vertical-align:top;position:relative;top:-1px">*</span>问题描述:</div>
          <div class="abs ph">请清楚描述问题</div>
          <svg class="abs" style="right:1px;bottom:0px" width="9" height="9"><path d="M1 8.3L8 1.3M4.6 8.3L8 4.9" stroke="#444" stroke-width="1"/></svg>
        </div>
        <div class="abs okbtn"><span style="position:absolute;left:11px">确</span><span style="position:absolute;left:52px">定</span></div>
      </td></tr>
      <tr class="s"><td>162受电弓TEST</td><td>文家车辆段</td><td class="lk">0452</td><td>正向</td><td class="lk">红外触发次数异常</td><td>2018-03-26 19:41:43</td><td>MP1</td><td>前滑板羊角状态</td><td>正常/异常</td><td class="rd">异常</td><td>51</td><td><svg width="62" height="19" style="vertical-align:middle;position:relative;top:0px"><g fill="none" stroke="#333" stroke-width="1.6"><rect x="2.2" y="3.9" width="19.5" height="13.4" rx="2.6"/><circle cx="10.3" cy="10.8" r="4.4"/><path d="M46 7.3V4.6Q46 2.9 44.3 2.9H33.6Q31.9 2.9 31.9 4.6V14.2Q31.9 15.9 33.6 15.9H46.4M46 7.3L51 4.3V14.6L46 11.5V13.6"/></g><path d="M2.8 4.6L5.2 1.3H10.6L13 4.6Z" fill="#444"/><circle cx="18.9" cy="6.9" r="1" fill="#555"/><circle cx="34.2" cy="5.9" r="1" fill="#333"/></svg></td><td class="rd">待图像确认</td></tr>
      <tr style="height:38px"><td>162受电弓TEST</td><td>文家车辆段</td><td class="lk">0452</td><td>反向</td><td class="lk">红外触发次数异常</td><td>2018-03-16 23:57:44</td><td>MP1</td><td>后滑板磨耗</td><td>0mm至15mm</td><td class="rd">15.01mm</td><td>70</td><td><svg width="62" height="19" style="vertical-align:middle;position:relative;top:0px"><g fill="none" stroke="#333" stroke-width="1.6"><rect x="2.2" y="3.9" width="19.5" height="13.4" rx="2.6"/><circle cx="10.3" cy="10.8" r="4.4"/><path d="M46 7.3V4.6Q46 2.9 44.3 2.9H33.6Q31.9 2.9 31.9 4.6V14.2Q31.9 15.9 33.6 15.9H46.4M46 7.3L51 4.3V14.6L46 11.5V13.6"/></g><path d="M2.8 4.6L5.2 1.3H10.6L13 4.6Z" fill="#444"/><circle cx="18.9" cy="6.9" r="1" fill="#555"/><circle cx="34.2" cy="5.9" r="1" fill="#333"/></svg></td><td class="rd">待图像确认</td></tr>
    </table>
  </div>
  <div class="abs pag" style="left:15px;top:383px">显示第 1 到第 3 条记录，总共 3 条记录 每页显示</div>
  <div class="abs psel" style="left:298px;top:375px">5 <span style="display:inline-block;width:0;height:0;border-left:3.5px solid transparent;border-right:3.5px solid transparent;border-bottom:4px solid #333;vertical-align:middle;margin-left:1px;position:relative;top:-1px"></span></div>
  <div class="abs pag" style="left:347px;top:383px">条记录</div>
  <div class="abs pag" style="left:19px;top:419px;font-weight:bold">说明：</div>
  <div class="abs pag" style="left:19px;top:437px">1、点击行处理告警</div>
  <div class="abs" style="left:-1px;top:0;width:2px;height:645px;background:#b0b1b5;z-index:5"></div>
  <div class="abs" id="mfoot"><div class="abs closebtn">关闭</div></div>
</div>
</body></html>
